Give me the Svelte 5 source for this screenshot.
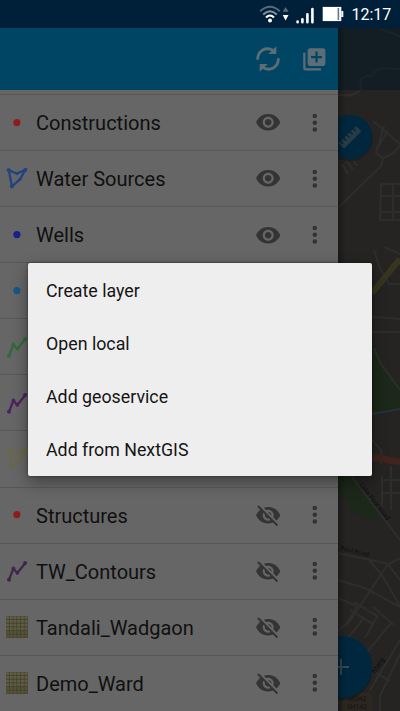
<script>
  const layers = [
    { name: 'Constructions', kind: 'point', color: '#8e1c1c', visible: true },
    { name: 'Water Sources', kind: 'polygon', color: '#20447e', visible: true },
    { name: 'Wells', kind: 'point', color: '#18208a', visible: true },
    { name: '', kind: 'point', color: '#17578a', visible: true },
    { name: '', kind: 'line', color: '#306b38', visible: true },
    { name: '', kind: 'line', color: '#4c2160', visible: true },
    { name: '', kind: 'polygon', color: '#6a6845', visible: true },
    { name: 'Structures', kind: 'point', color: '#8e1c1c', visible: false },
    { name: 'TW_Contours', kind: 'line', color: '#40264c', visible: false },
    { name: 'Tandali_Wadgaon', kind: 'raster', color: '', visible: false },
    { name: 'Demo_Ward', kind: 'raster', color: '', visible: false }
  ];
  const options = ['Create layer', 'Open local', 'Add geoservice', 'Add from NextGIS'];
  const cells = [0, 1, 2, 3, 4, 5];
</script>

<div class="screen">
  <header class="status">
    <svg class="wifi" width="32" height="20" viewBox="0 0 32 20" fill="none">
      <path d="M1.2 7.2Q11 -1.8 20.8 7.2" stroke="#536b7e" stroke-width="2" />
      <path d="M4.2 10.4Q11 4 17.8 10.4" stroke="#8695a2" stroke-width="2" />
      <path d="M7 13.4Q11 9.6 15 13.4" stroke="#fff" stroke-width="2.1" />
      <circle cx="11" cy="16.4" r="2" fill="#fff" />
      <path d="M26.6 3L29.5 7.8H23.7Z" fill="#536b7e" />
      <path d="M26.6 16.5L29.5 11H23.7Z" fill="#fff" />
    </svg>
    <svg class="signal" width="18" height="17" viewBox="0 0 18 17" stroke="#fff" stroke-width="2.6" stroke-linecap="round">
      <path d="M1.6 14.6v.6M6.4 12.2v3M11.4 7.2v8M16.4 2v13.2" />
    </svg>
    <svg class="battery" width="22" height="16" viewBox="0 0 22 16">
      <rect x=".7" y=".9" width="18.6" height="14.2" fill="#fff" />
      <rect x="15.6" y="2" width="1.6" height="12" fill="#60788b" />
      <rect x="19.3" y="5" width="2" height="6" fill="#fff" />
    </svg>
    <time>12:17</time>
  </header>

  <main>
    <section class="drawer">
      <div class="toolbar">
        <svg class="sync" width="26" height="28" viewBox="0 0 26 28" fill="none" stroke="#5c6d76" stroke-width="2.8">
          <path d="M2.6 14.8C2.6 5.4 11 1.4 18.4 5.4" />
          <path d="M23.4 13.2C23.4 22.6 15 26.6 7.6 22.6" />
          <path d="M21.3 1.2V9H13.3Z" fill="#5c6d76" stroke="none" />
          <path d="M4.7 26.8V19H12.7Z" fill="#5c6d76" stroke="none" />
        </svg>
        <svg class="library" width="26.6" height="26.6" viewBox="0 0 24 24" fill="#5c6d76">
          <path d="M4 6H2v14c0 1.1.9 2 2 2h14v-2H4V6zm16-4H8c-1.1 0-2 .9-2 2v12c0 1.1.9 2 2 2h12c1.1 0 2-.9 2-2V4c0-1.1-.9-2-2-2zm-1 9h-4v4h-2v-4H9V9h4V5h2v4h4v2z" />
        </svg>
      </div>
      <div class="scrolled"></div>
      <ul>
        {#each layers as layer}
          <li>
            <svg class="kind" width="28" height="28" viewBox="0 0 28 28">
              {#if layer.kind === 'point'}
                <circle cx="13.9" cy="13.6" r="3.6" fill={layer.color} />
              {:else if layer.kind === 'line'}
                <path d="M6 22.8L10.4 11.6L14.3 16L22 6.6" fill="none" stroke={layer.color} stroke-width="2.3" />
                <g fill={layer.color}>
                  <circle cx="6" cy="22.8" r="2" /><circle cx="10.4" cy="11.2" r="1.8" /><circle cx="14.3" cy="16" r="1.7" /><circle cx="22.1" cy="5.9" r="2" />
                </g>
              {:else if layer.kind === 'polygon'}
                <path d="M5.8 5.2L13.6 8.6L22.2 5.1L17 14.2L9 21.4Z" fill="none" stroke={layer.color} stroke-width="2.3" />
                <g fill={layer.color}>
                  <circle cx="5.8" cy="5.2" r="2" /><circle cx="22.2" cy="5.1" r="2" /><circle cx="9" cy="21.2" r="2" /><circle cx="14" cy="8.6" r="1.6" /><circle cx="17" cy="14.2" r="1.5" />
                </g>
              {:else}
                <rect x="3" y="3" width="22" height="22" fill="#454330" />
                {#each cells as r}
                  {#each cells as c}
                    <rect x={3.2 + c * 3.7} y={3.3 + r * 3.7} width="2.8" height="2.7" fill={r > 3 ? '#555337' : '#605e45'} />
                  {/each}
                {/each}
              {/if}
            </svg>
            <span class="name">{layer.name}</span>
            <svg class="eye" width="26.4" height="26.4" viewBox="0 0 24 24" fill="#343434">
              {#if layer.visible}
                <path d="M12 4.5C7 4.5 2.73 7.61 1 12c1.73 4.39 6 7.5 11 7.5s9.27-3.11 11-7.5c-1.73-4.39-6-7.5-11-7.5zM12 17c-2.76 0-5-2.24-5-5s2.24-5 5-5 5 2.24 5 5-2.24 5-5 5zm0-8c-1.66 0-3 1.34-3 3s1.34 3 3 3 3-1.34 3-3-1.34-3-3-3z" />
              {:else}
                <path d="M12 7c2.76 0 5 2.24 5 5 0 .65-.13 1.26-.36 1.83l2.92 2.92c1.51-1.26 2.7-2.89 3.43-4.75-1.73-4.39-6-7.5-11-7.5-1.4 0-2.74.25-3.98.7l2.16 2.16C10.74 7.13 11.35 7 12 7zM2 4.27l2.28 2.28.46.46C3.08 8.3 1.78 10.02 1 12c1.73 4.39 6 7.5 11 7.5 1.55 0 3.03-.3 4.38-.84l.42.42L19.73 22 21 20.73 3.27 3 2 4.27zM7.53 9.8l1.55 1.55c-.05.21-.08.43-.08.65 0 1.66 1.34 3 3 3 .22 0 .44-.03.65-.08l1.55 1.55c-.67.33-1.41.53-2.2.53-2.76 0-5-2.24-5-5 0-.79.2-1.53.53-2.2zm4.31-.78l3.15 3.15.02-.16c0-1.66-1.34-3-3-3l-.17.01z" />
              {/if}
            </svg>
            <svg class="dots" width="6" height="20" viewBox="0 0 6 20" fill="#343434">
              <circle cx="2.8" cy="3" r="2.3" /><circle cx="2.8" cy="9.8" r="2.3" /><circle cx="2.8" cy="16.5" r="2.3" />
            </svg>
          </li>
        {/each}
      </ul>
    </section>

    <svg class="map" width="62" height="683" viewBox="338 28 62 683">
      <defs>
        <linearGradient id="edge"><stop offset="0" stop-color="#000" stop-opacity=".3" /><stop offset="1" stop-color="#000" stop-opacity="0" /></linearGradient>
      </defs>
      <rect x="338" y="28" width="62" height="683" fill="#252422" />
      <g fill="#1c2819">
        <path d="M366 335L378 350L387 374L400 384V406L380 415L372 408Z" />
        <path d="M338 470H351L380 514L370 521L351 511L346 498L338 493Z" />
      </g>
      <g fill="none" stroke="#2d2d2c" stroke-width="2.2" stroke-linejoin="round">
        <path d="M338 95Q352 97 360 91M338 208L381 166L383 158L376 153L378 147L388 130M373 121L400 144M376 153L384 126M383 158L394 153L400 145" />
        <path d="M381 184H400M381 184L380 220H400M380 196H400M393 184V220M381 212H400" />
        <path d="M374 250L380 268L389 284H400M384 247L400 254M372 317L400 319M372 332H400M374 348L381 364L400 390M372 440L381 450V464M382 476V510M391 466V510M382 480H400M382 493H400" />
        <path d="M347 470L400 540M338 553L389 564L400 558M388 564L350 621L338 631M388 564L400 580M369 560L382 575L400 606M338 580L365 588L400 607M350 610L373 624M354 602L377 616M338 598L357 606L346 625M373 607L394 625M392 622L357 664M378 615L365 638M400 640L370 690M400 654L380 696V711M376 673L390 681M338 650L364 618" />
        <path d="M342 164L348 174M347 161L353 170M352 158L357 166" />
      </g>
      <rect x="338" y="28" width="62" height="62" fill="#131e24" />
      <path d="M380 29L392 33L400 36M361 90Q359 79 364 77Q368 75 371 76Q376 69 384 68L400 69" fill="none" stroke="#19242a" stroke-width="2" />
      <path d="M372 293L400 259" stroke="#37351f" stroke-width="6" />
      <path d="M372 414L400 409" stroke="#26323a" stroke-width="2" />
      <path d="M372 457L400 462" stroke="#40241d" stroke-width="7" />
      <g fill="#0c0c0b">
        <text transform="translate(359 485) rotate(52)" font-size="6.3">Lake Pool Road</text>
        <text transform="translate(340 550) rotate(13)" font-size="6.2">Pool Road</text>
        <text transform="translate(375 674) rotate(-56)" font-size="7">Marg</text>
      </g>
      <rect x="343" y="694" width="28" height="20" rx="2" fill="#2c2620" stroke="#352a22" />
      <g fill="#121110" font-size="6.6"><text x="348" y="700.5">MSH2</text><text x="347" y="709.3">SH142</text></g>
      <circle cx="350" cy="138.5" r="23" fill="#1c1c1b" opacity=".7" />
      <circle cx="350" cy="137" r="22.3" fill="#00273d" />
      <g transform="translate(350 137) rotate(-45)">
        <path d="M-12.5 -3.5H-10.5V0H-9V-3.5H-6V0H-4.5V-3.5H-1.5V0H0V-3.5H3V0H4.5V-3.5H7.5V0H9V-3.5H12V4H-12.5Z" fill="#293c45" />
      </g>
      <circle cx="341" cy="669" r="31.5" fill="#171819" opacity=".7" />
      <circle cx="341" cy="667" r="31.3" fill="#00273d" />
      <path d="M333 667H349M341 659V675" stroke="#394852" stroke-width="2" />
      <rect x="338" y="28" width="8" height="683" fill="url(#edge)" />
    </svg>
  </main>

  <div class="menu" role="menu">
    {#each options as option}
      <div class="option" role="menuitem">{option}</div>
    {/each}
  </div>
</div>

<style>
  .screen {
    position: relative;
    width: 400px;
    height: 711px;
    overflow: hidden;
    background: #252422;
    font-family: Roboto, "Liberation Sans", sans-serif;
  }
  .status {
    box-sizing: border-box;
    height: 28px;
    background: #00203a;
    display: flex;
    justify-content: flex-end;
    padding-right: 9px;
    color: #fff;
  }
  .wifi { margin: 4px 5px 0 0; }
  .signal { margin: 7px 8px 0 0; }
  .battery { margin: 6px 8px 0 0; }
  time { font-size: 16px; line-height: 30px; width: 39.5px; white-space: nowrap; }
  main { display: flex; height: 683px; }
  .drawer { width: 338px; flex: none; background: #666; overflow: hidden; }
  .toolbar {
    height: 62px;
    background: #004564;
    display: flex;
    justify-content: flex-end;
    align-items: center;
    gap: 20px;
    padding-right: 10px;
  }
  .toolbar svg { flex: none; }
  .scrolled { height: 4px; border-bottom: 1px solid #585858; }
  ul { margin: 0; padding: 0; list-style: none; }
  li {
    box-sizing: border-box;
    height: 56.08px;
    border-bottom: 1px solid #585858;
    display: flex;
    align-items: center;
    padding: 0 20px 0 3px;
  }
  .kind { flex: none; margin-right: 5px; }
  .name { flex: 1; font-size: 20px; color: #101010; padding-top: 1px; white-space: nowrap; }
  .eye { flex: none; margin-right: 31px; }
  .dots { flex: none; }
  .map { flex: none; display: block; font-family: "Noto Sans", sans-serif; text-rendering: geometricPrecision; }
  .menu {
    position: absolute;
    left: 28px;
    top: 263px;
    width: 344px;
    height: 213px;
    border-radius: 2px;
    background: #eee;
    box-shadow: 0 6px 16px rgba(0, 0, 0, 0.38), 0 0 3px rgba(0, 0, 0, 0.4);
    display: flex;
    flex-direction: column;
  }
  .option {
    flex: 1;
    display: flex;
    align-items: center;
    padding: 1px 0 0 18px;
    font-size: 17.8px;
    color: #151515;
  }
</style>
